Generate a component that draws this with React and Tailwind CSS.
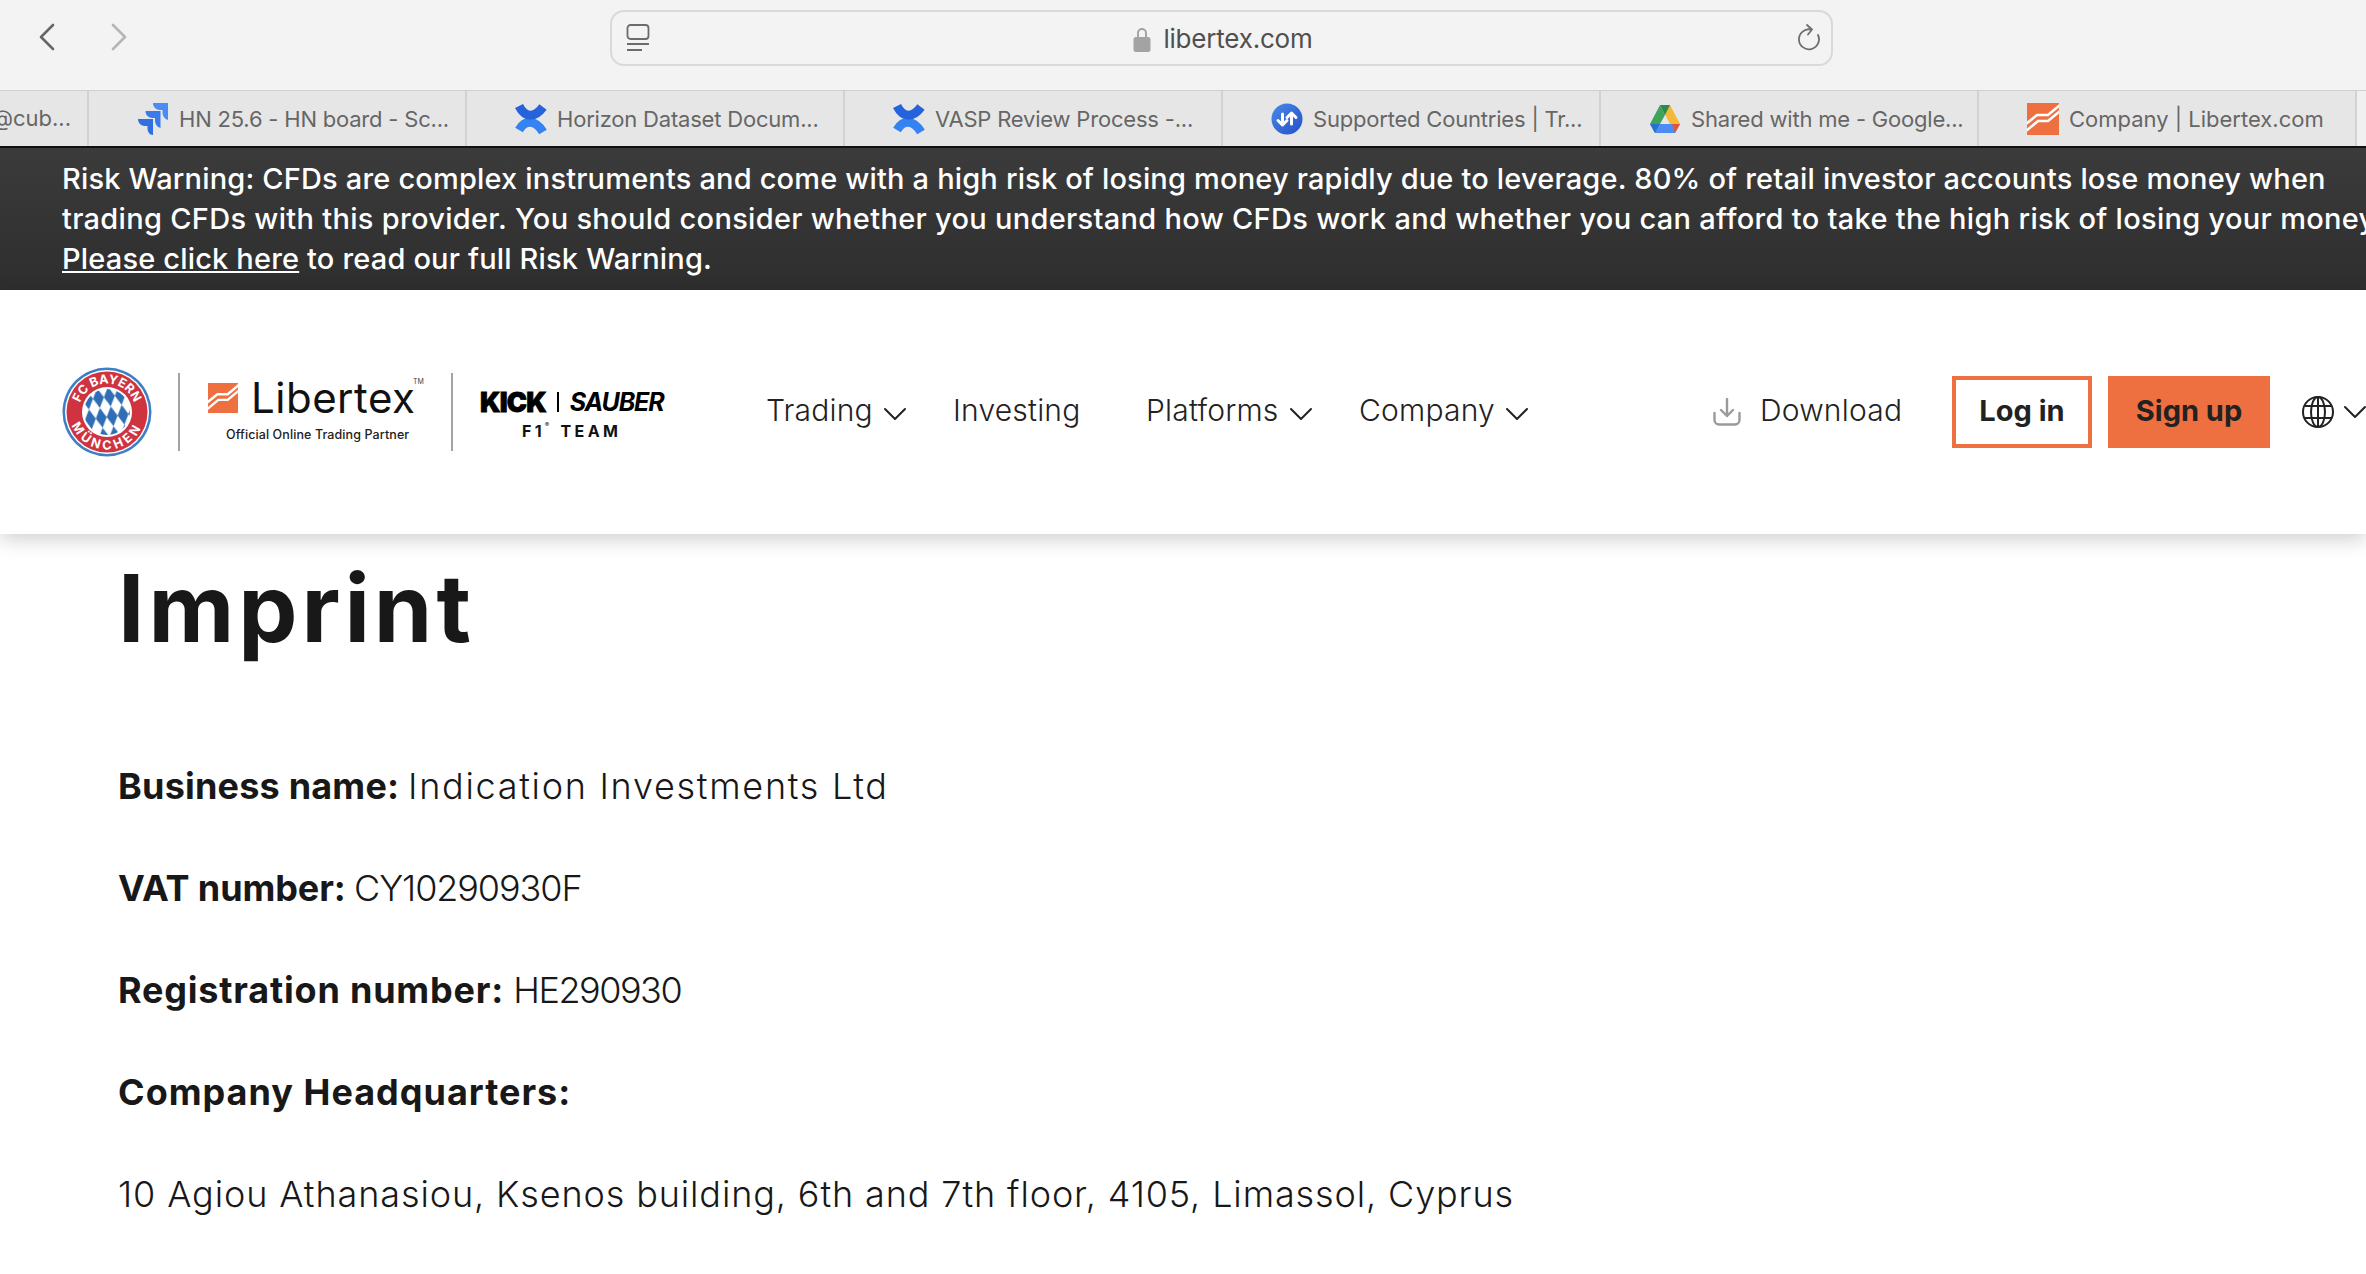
import { ChevronDown } from 'lucide-react';

const ui = "[font-family:'Inter','Liberation_Sans',sans-serif]";

function JiraIcon() {
  return (
    <svg viewBox="0 0 32 32" className="w-8 h-8 shrink-0">
      <path d="M31 0H16c0 4 3 7 7 7h2.500v2.500c0 3.600 2.400 6.500 5.500 7.500z" fill="#4a8cf5" />
      <path d="M23.500 8H8.500c0 4 3 7 7 7H18v2.500c0 3.600 2.400 6.500 5.500 7.500z" fill="#3a7be8" />
      <path d="M16 16H1c0 4 3 7 7 7h2.500v2.500c0 3.600 2.400 6.500 5.500 6.500z" fill="#2f6fe0" />
    </svg>
  );
}

function ConfluenceIcon() {
  return (
    <svg viewBox="0 0 32 32" className="w-8 h-8 shrink-0" fill="none" strokeWidth="9">
      <path d="M4 27C10 17 20 16 28 29" stroke="#3583f2" />
      <path d="M4 3C10 15 20 15 28 4" stroke="#2563dc" />
    </svg>
  );
}

function TransferIcon() {
  return (
    <svg viewBox="0 0 32 32" className="w-8 h-8 shrink-0">
      <defs>
        <linearGradient id="transferFill" x1="0" y1="0" x2="1" y2="1">
          <stop offset="0" stopColor="#4a8ae8" />
          <stop offset="1" stopColor="#2350c8" />
        </linearGradient>
      </defs>
      <circle cx="16" cy="16" r="15.500" fill="url(#transferFill)" />
      <path d="M11.500 22V11M7 17.500l4.500 4.500 4.500-4.500M20.500 21V10M16 14.500l4.500-4.500 4.500 4.500" fill="none" stroke="#fff" strokeWidth="3" strokeLinecap="round" strokeLinejoin="round" />
    </svg>
  );
}

function DriveIcon() {
  return (
    <svg viewBox="0 0 32 32" className="w-8 h-8 shrink-0">
      <path d="M11 2h10l10 19H21z" fill="#f5b93a" />
      <path d="M11 2 1 21l5 9 10-18z" fill="#3fa45b" />
      <path d="M11 2l5 10 5-10z" fill="#2d8a4e" />
      <path d="M6 30h20l5-9H11z" fill="#4c8df5" />
      <path d="M26 30l5-9h-8z" fill="#e5533d" />
      <path d="M1 21l5 9 5-9z" fill="#2a6fd6" />
    </svg>
  );
}

function LibertexMark({ className }) {
  return (
    <svg viewBox="0 0 32 32" className={className}>
      <rect width="32" height="32" fill="#ee7040" />
      <path d="M-1 21 10 12h11L33 2" fill="none" stroke="#fff" strokeWidth="2.600" />
      <path d="M-1 28 11 18h10L33 8" fill="none" stroke="#fff" strokeWidth="2.600" />
    </svg>
  );
}

function BayernCrest() {
  return (
    <svg viewBox="0 0 90 90" className="w-[90px] h-[90px] shrink-0">
      <defs>
        <pattern id="rauten" width="11" height="20" patternUnits="userSpaceOnUse" patternTransform="rotate(-8 45 45)">
          <rect width="11" height="20" fill="#fff" />
          <path d="M5.500 0 11 10 5.500 20 0 10z" fill="#2f6db5" />
        </pattern>
        <path id="topArc" d="M16.500 45a28.500 28.500 0 0 1 57 0" />
        <path id="bottomArc" d="M7.500 45a37.500 37.500 0 0 0 75 0" />
      </defs>
      <circle cx="45" cy="45" r="44.500" fill="#3c7fc4" />
      <circle cx="45" cy="45" r="42" fill="#fff" />
      <circle cx="45" cy="45" r="40.500" fill="#cf3340" />
      <circle cx="45" cy="45" r="25" fill="#fff" />
      <circle cx="45" cy="45" r="23" fill="url(#rauten)" />
      <text fontFamily="Inter, sans-serif" fontWeight="700" fontSize="12.500" fill="#fff">
        <textPath href="#topArc" startOffset="50%" textAnchor="middle">FC BAYERN</textPath>
      </text>
      <text fontFamily="Inter, sans-serif" fontWeight="700" fontSize="12.500" letterSpacing="3.500" fill="#fff">
        <textPath href="#bottomArc" startOffset="50%" textAnchor="middle">MÜNCHEN</textPath>
      </text>
    </svg>
  );
}

function Brand() {
  return (
    <div className="w-[704px] shrink-0 flex items-center">
      <BayernCrest />
      <div className="w-0.5 h-[78px] bg-[#a3a3a3] ml-[26px]" />
      <div className="w-[243px] ml-[28px] flex flex-col shrink-0">
        <div className="flex items-center relative">
          <LibertexMark className="w-[30px] h-[30px] shrink-0" />
          <span className="ml-[13px] text-[42px] leading-[34px] font-normal text-[#111] tracking-[0.5px]">Libertex</span>
          <span className="absolute left-[205px] -top-[3px] text-[7px] leading-none text-[#444]">TM</span>
        </div>
        <span className="ml-[18px] mt-[12px] text-[12.500px] leading-4 font-medium text-[#222] tracking-[0.1px] whitespace-nowrap">Official Online Trading Partner</span>
      </div>
      <div className="w-0.5 h-[78px] bg-[#a3a3a3]" />
      <div className="ml-[27px] mt-[3px] flex flex-col items-start w-[186px] shrink-0">
        <div className="flex items-center leading-none whitespace-nowrap">
          <span className="text-[27px] font-black tracking-[-0.8px] text-black [-webkit-text-stroke:0.8px_black]">KICK</span>
          <span className="w-0.5 h-5 bg-black mx-[11px]" />
          <span className="text-[25px] font-bold italic tracking-[-1.200px] text-black">SAUBER</span>
        </div>
        <span className="ml-[42px] mt-[7px] text-[16px] leading-4 font-bold tracking-[3.400px] text-[#111] whitespace-nowrap">F1<sup className="text-[6px] mr-2 align-super">®</sup>TEAM</span>
      </div>
    </div>
  );
}

const tabs = [
  { icon: <JiraIcon />, title: 'HN 25.6 - HN board - Sc...', tracking: 'tracking-[-0.2px]' },
  { icon: <ConfluenceIcon />, title: 'Horizon Dataset Docum...', tracking: 'tracking-[-0.2px]' },
  { icon: <ConfluenceIcon />, title: 'VASP Review Process -...', tracking: 'tracking-[-0.2px]' },
  { icon: <TransferIcon />, title: 'Supported Countries | Tr...', tracking: 'tracking-[-0.2px]' },
  { icon: <DriveIcon />, title: 'Shared with me - Google...', tracking: 'tracking-[-0.2px]' },
  { icon: <LibertexMark className="w-8 h-8 shrink-0" />, title: 'Company | Libertex.com', tracking: 'tracking-normal' },
];

const nav = [
  { label: 'Trading', width: 'w-[187px]', menu: true },
  { label: 'Investing', width: 'w-[193px]' },
  { label: 'Platforms', width: 'w-[213px]', menu: true },
  { label: 'Company', width: 'w-[354px]', menu: true },
];

// tracking differs per row: the site's geometric font has wider letters and narrower digits than Inter
const details = [
  { label: 'Business name:', value: 'Indication Investments Ltd', labelTracking: 'tracking-[0.2px]', valueTracking: 'tracking-[1.700px]' },
  { label: 'VAT number:', value: 'CY10290930F', labelTracking: 'tracking-[-0.1px]', valueTracking: 'tracking-[-1.100px]' },
  { label: 'Registration number:', value: 'HE290930', labelTracking: 'tracking-[0.8px]', valueTracking: 'tracking-[-1.500px]' },
  { label: 'Company Headquarters:', value: '', labelTracking: 'tracking-[1px]', valueTracking: '' },
  { label: '', value: '10 Agiou Athanasiou, Ksenos building, 6th and 7th floor, 4105, Limassol, Cyprus', labelTracking: '', valueTracking: 'tracking-[0.880px]' },
];

export default function App() {
  return (
    <div className={`w-[2366px] h-[1274px] overflow-hidden bg-white ${ui}`}>
      {/* browser chrome */}
      <div className="h-[90px] bg-[#f3f3f3] flex items-start pt-[10px] relative">
        <svg viewBox="0 0 18 28" className="w-[18px] h-7 ml-[38px] mt-[13px] shrink-0" fill="none" stroke="#666" strokeWidth="2.600" strokeLinecap="round" strokeLinejoin="round">
          <path d="M15 2 3 14l12 12" />
        </svg>
        <svg viewBox="0 0 18 28" className="w-[18px] h-7 ml-[54px] mt-[13px] shrink-0" fill="none" stroke="#b5b5b5" strokeWidth="2.600" strokeLinecap="round" strokeLinejoin="round">
          <path d="m3 2 12 12L3 26" />
        </svg>
        <div className="ml-[482px] w-[1223px] h-[56px] rounded-[14px] border-2 border-[#d9d9d9] flex items-center relative shrink-0">
          <svg viewBox="0 0 24 28" className="w-6 h-7 ml-[14px] shrink-0" fill="none" stroke="#6b6b6b" strokeWidth="1.800">
            <rect x="1.500" y="1" width="21" height="14" rx="3" />
            <path d="M1 20h22M1 26h15" />
          </svg>
          <div className="flex-1 flex items-center justify-center gap-[12px] pt-[1px]">
            <svg viewBox="0 0 18 26" className="w-[18px] h-[26px]" fill="#a3a3a3">
              <path d="M4 11V7a5 5 0 0 1 10 0v4h-2V7a3 3 0 0 0-6 0v4z" />
              <rect x="0.500" y="11" width="17" height="15" rx="2.500" />
            </svg>
            <span className="text-[26px] leading-none text-[#4f4f4f] tracking-[-0.2px]">libertex.com</span>
          </div>
          <svg viewBox="0 0 24 28" className="w-6 h-7 mr-[11px] shrink-0" fill="none" stroke="#6e6e6e" strokeWidth="1.800" strokeLinecap="round" strokeLinejoin="round">
            <path d="M15 5.500A10 10 0 1 0 22 11" />
            <path d="m11 1 5 4.500-4 5" />
          </svg>
        </div>
      </div>

      {/* tabs */}
      <div className="h-[56px] bg-[#e6e6e6] flex border-t border-[#d0d0d0] text-[22px] text-[#666]">
        <div className="w-[89px] shrink-0 border-r-2 border-[#d2d2d2] flex items-center justify-end pr-[16px] overflow-hidden whitespace-nowrap">@cub...</div>
        {tabs.map((tab) => (
          <div key={tab.title} className="w-[378px] shrink-0 border-r-2 border-[#d2d2d2] flex items-center pl-[48px] gap-[10px] whitespace-nowrap">
            {tab.icon}
            <span className={`pt-[2px] ${tab.tracking}`}>{tab.title}</span>
          </div>
        ))}
        <div className="flex-1 bg-[#f0f0f0]" />
      </div>

      {/* risk banner */}
      <div className="h-[144px] border-t-2 border-[#111] bg-gradient-to-b from-[#3b3b3b] to-[#2e2e2e] pl-[62px] pt-[11px] text-[29px] leading-[40px] font-medium tracking-[0.17px] text-white whitespace-nowrap overflow-hidden">
        <p>Risk Warning: CFDs are complex instruments and come with a high risk of losing money rapidly due to leverage. 80% of retail investor accounts lose money when</p>
        <p className="tracking-[0.3px]">trading CFDs with this provider. You should consider whether you understand how CFDs work and whether you can afford to take the high risk of losing your money.</p>
        <p><span className="underline">Please click here</span> to read our full Risk Warning.</p>
      </div>

      {/* site header */}
      <header className="h-[244px] bg-white relative z-10 shadow-[0_6px_18px_rgba(0,0,0,0.18)] pl-[62px] flex items-center whitespace-nowrap text-[#222]">
        <Brand />
        {nav.map((item) => (
          <div key={item.label} className={`${item.width} shrink-0 flex items-center h-10 text-[30px] font-light leading-none tracking-[0.2px]`}>
            <span className="-mt-[5px]">{item.label}</span>
            {item.menu && <ChevronDown className="w-10 h-10 ml-[2px] mt-[4px]" strokeWidth={1.200} />}
          </div>
        ))}
        <svg viewBox="0 0 28 28" className="w-7 h-7 shrink-0" fill="none" stroke="#9a9a9a" strokeWidth="2.400" strokeLinecap="round" strokeLinejoin="round">
          <path d="M14 1v17M8 12l6 6 6-6" />
          <path d="M1.500 15v7a4.500 4.500 0 0 0 4.500 4.500h16a4.500 4.500 0 0 0 4.500-4.500v-7" />
        </svg>
        <span className="ml-[19px] -mt-[5px] w-[192px] shrink-0 text-[30px] font-light leading-none tracking-[0.2px]">Download</span>
        <button className="w-[140px] h-[72px] pb-[3px] border-4 border-[#ee7040] text-[29px] font-bold shrink-0">Log in</button>
        <button className="w-[162px] h-[72px] pb-[3px] ml-[16px] bg-[#ee7040] text-[29px] font-bold shrink-0">Sign up</button>
        <svg viewBox="0 0 32 32" className="w-8 h-8 ml-[32px] shrink-0" fill="none" stroke="#222" strokeWidth="2">
          <circle cx="16" cy="16" r="15" />
          <ellipse cx="16" cy="16" rx="7" ry="15" />
          <path d="M3 10h26M3 22h26M16 1v30" />
        </svg>
        <ChevronDown className="w-10 h-10 ml-px shrink-0" strokeWidth={1.200} />
      </header>

      {/* page content */}
      <main className="pl-[118px] text-[#181818]">
        <h1 className="pt-[20px] text-[94px] leading-[108px] font-bold tracking-[4px]">Imprint</h1>
        <div className="mt-[73px] text-[36px] leading-[102px] font-light whitespace-nowrap">
          {details.map((row) => (
            <p key={row.label || row.value}>
              {row.label && <strong className={`font-bold ${row.labelTracking}`}>{row.label} </strong>}
              <span className={row.valueTracking}>{row.value}</span>
            </p>
          ))}
        </div>
      </main>
    </div>
  );
}
